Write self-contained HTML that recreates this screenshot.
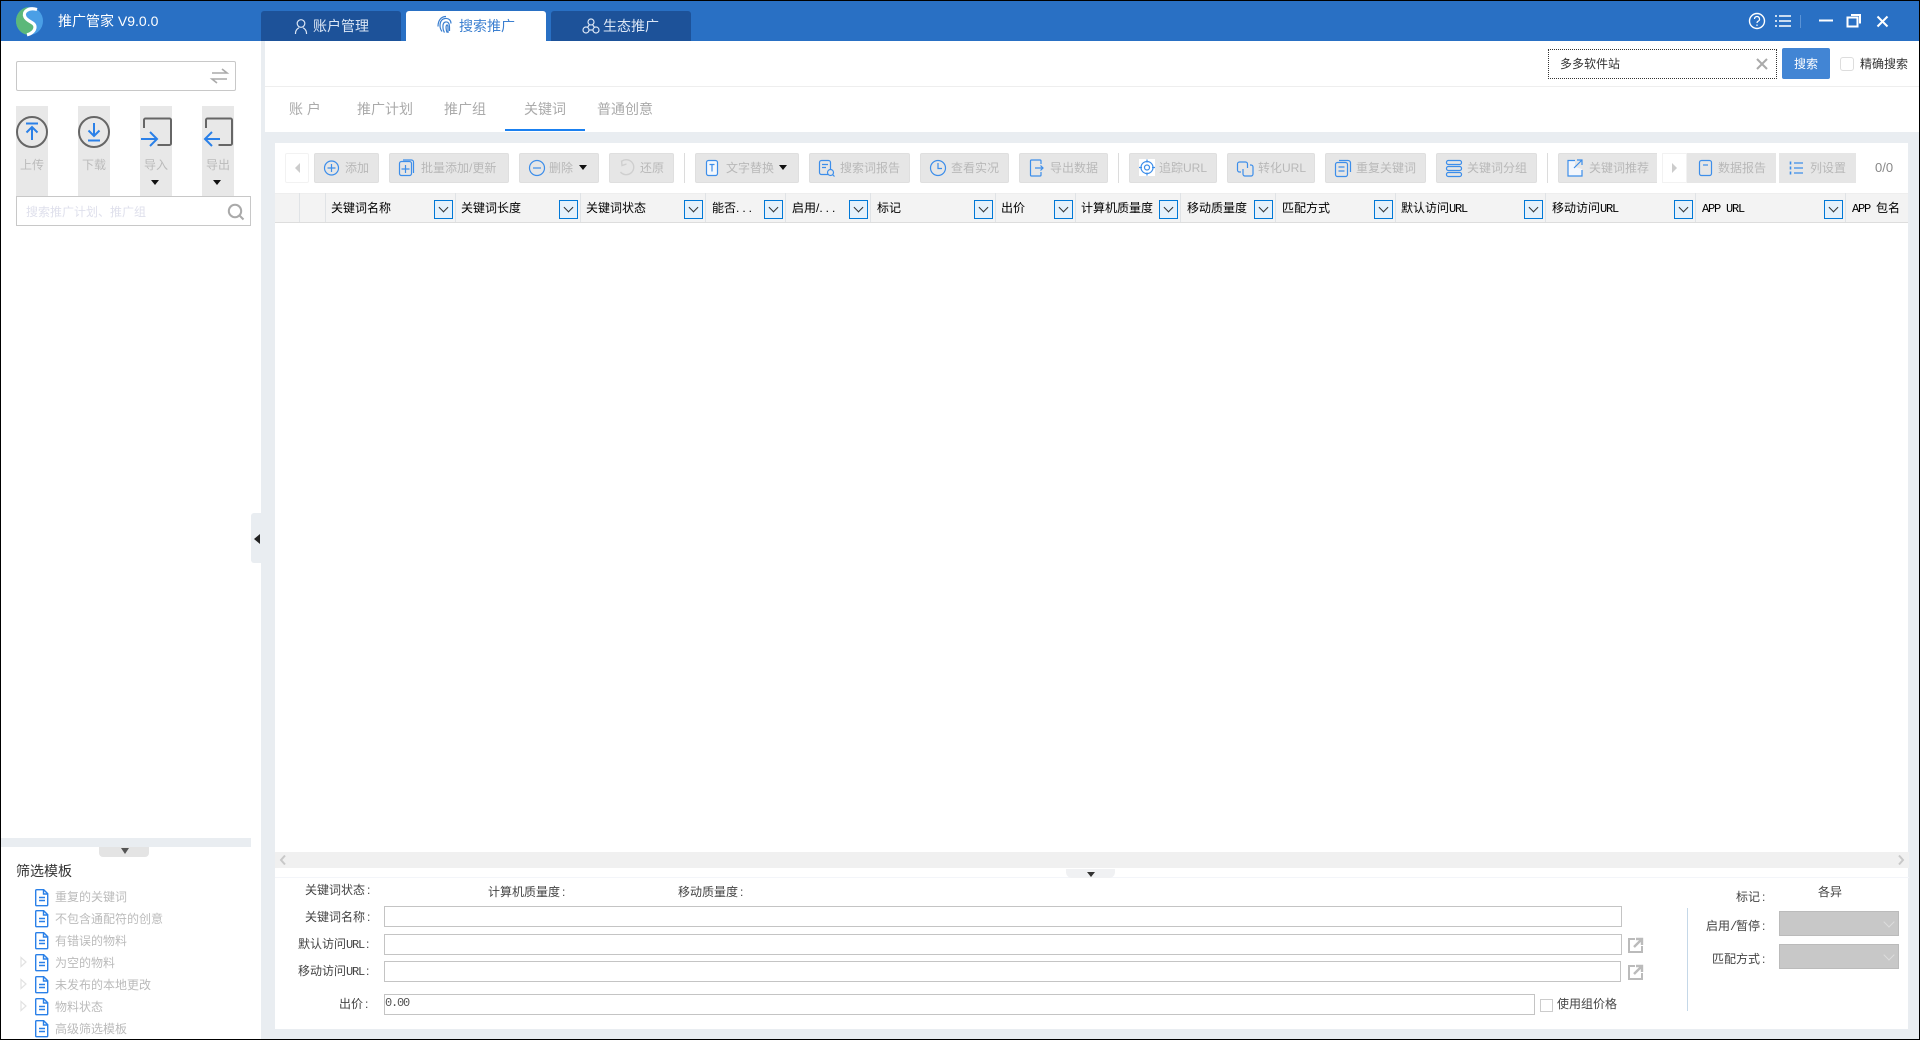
<!DOCTYPE html>
<html lang="zh-CN">
<head>
<meta charset="utf-8">
<title>推广管家 V9.0.0</title>
<style>
*{box-sizing:border-box}
html,body{margin:0;padding:0;width:1920px;height:1040px;overflow:hidden;background:#000}
body{position:relative;font-family:"Liberation Sans","Noto Sans CJK SC",sans-serif;font-size:12px}
div,span{position:absolute;white-space:nowrap}
.t{line-height:16px;height:16px}
.bg{background:#e9edf1}
.w{background:#fff}
.tab{top:11px;height:30px;width:140px;background:#1d5299;border-radius:3px 3px 0 0}
.tabt{top:17px;font-size:14px;line-height:18px;color:#dbe6f5}
.nav{top:100px;font-size:14px;line-height:18px;color:#aaa}
.lb{top:106px;width:32px;height:90px;background:#e8e8e8}
.lt{top:157px;color:#bbb;line-height:16px}
.tri{width:0;height:0;border-left:4px solid transparent;border-right:4px solid transparent;border-top:5px solid #111}
.b{top:153px;height:30px;background:#e6e6e6;border:1px solid #dfdfdf;border-radius:2px}
.bt{top:160px;color:#b8b8b8;line-height:16px}
.sep{top:153px;width:1px;height:30px;background:#dcdcdc}
.col{top:193px;width:1px;height:29px;background:#e0e3e6}
.h{top:200px;color:#000;line-height:16px}
.m{font-family:"Liberation Mono",monospace;letter-spacing:-1.2px}
.d{letter-spacing:3px}
.fb{top:200px;width:19px;height:19px;background:#e5f1fb;border:1px solid #0078d7}
.fb::after{content:"";position:absolute;left:5px;top:3px;width:6px;height:6px;border-right:1px solid #333;border-bottom:1px solid #333;transform:rotate(45deg)}
.li{left:55px;color:#bbb;line-height:16px}
.fl{color:#444;line-height:16px;font-family:"Liberation Sans","WenQuanYi Zen Hei",sans-serif}
.fm{font-family:"Liberation Mono",monospace;letter-spacing:-1.2px}
.fl i{font-style:normal;margin-left:2px}
.in{left:384px;height:21px;background:#fff;border:1px solid #c4c4c4}
.sel{left:1779px;width:120px;height:25px;background:#c8c8c8;border:1px solid #bbb}
.sel::after{content:"";position:absolute;left:105px;top:6px;width:7px;height:7px;border-right:1px solid #ddd;border-bottom:1px solid #ddd;transform:rotate(45deg)}
svg{position:absolute;left:0;top:0}
</style>
</head>
<body>
<!-- base -->
<div class="w" style="left:1px;top:1px;width:1918px;height:1038px"></div>
<div style="left:1px;top:1px;width:1918px;height:40px;background:#2970c4"></div>

<div class="tab" style="left:261px"></div>
<div class="tab" style="left:406px;background:#fff"></div>
<div class="tab" style="left:551px"></div>
<span class="t" style="left:58px;top:12px;color:#fff;font-size:14px;line-height:18px;height:18px">推广管家 V9.0.0</span>
<span class="tabt" style="left:313px">账户管理</span>
<span class="tabt" style="left:459px;color:#3b7fd0">搜索推广</span>
<span class="tabt" style="left:603px">生态推广</span>

<!-- gutters -->
<div class="bg" style="left:261px;top:41px;width:4px;height:998px"></div>
<div class="bg" style="left:265px;top:132px;width:1654px;height:11px"></div>
<div class="bg" style="left:265px;top:143px;width:10px;height:896px"></div>
<div class="bg" style="left:1908px;top:143px;width:11px;height:896px"></div>
<div class="bg" style="left:275px;top:1029px;width:1633px;height:10px"></div>
<div style="left:265px;top:86px;width:1654px;height:1px;background:#eee"></div>

<!-- left handle -->
<div class="bg" style="left:251px;top:513px;width:10px;height:50px;border-radius:3px 0 0 3px"></div>
<div style="left:254px;top:534px;width:0;height:0;border-top:5px solid transparent;border-bottom:5px solid transparent;border-right:6px solid #222"></div>

<!-- left top -->
<div class="w" style="left:16px;top:61px;width:220px;height:30px;border:1px solid #c8c8c8;border-radius:2px"></div>
<div class="lb" style="left:16px"></div>
<div class="lb" style="left:78px"></div>
<div class="lb" style="left:140px"></div>
<div class="lb" style="left:202px"></div>
<span class="lt" style="left:20px">上传</span>
<span class="lt" style="left:82px">下载</span>
<span class="lt" style="left:144px">导入</span>
<span class="lt" style="left:206px">导出</span>
<div class="tri" style="left:151px;top:180px"></div>
<div class="tri" style="left:213px;top:180px"></div>
<div class="w" style="left:16px;top:196px;width:235px;height:30px;border:1px solid #c8c8c8"></div>
<span class="t" style="left:26px;top:204px;color:#dfe0ec">搜索推广计划、推广组</span>

<!-- left bottom -->
<div class="bg" style="left:1px;top:838px;width:250px;height:9px"></div>
<div style="left:99px;top:847px;width:50px;height:10px;background:#e4e4e4;border-radius:0 0 4px 4px"></div>
<div style="left:121px;top:848px;width:0;height:0;border-left:4.5px solid transparent;border-right:4.5px solid transparent;border-top:6px solid #555"></div>
<span style="left:16px;top:862px;font-size:14px;line-height:18px;color:#333">筛选模板</span>
<span class="li" style="top:889px">重复的关键词</span>
<span class="li" style="top:911px">不包含通配符的创意</span>
<span class="li" style="top:933px">有错误的物料</span>
<span class="li" style="top:955px">为空的物料</span>
<span class="li" style="top:977px">未发布的本地更改</span>
<span class="li" style="top:999px">物料状态</span>
<span class="li" style="top:1021px">高级筛选模板</span>

<!-- top right search -->
<div class="w" style="left:1548px;top:49px;width:229px;height:30px;border:1px dotted #333"></div>
<span class="t" style="left:1560px;top:56px;color:#333">多多软件站</span>
<div style="left:1782px;top:48px;width:48px;height:31px;background:#4285d4;border-radius:2px"></div>
<span class="t" style="left:1794px;top:56px;color:#fff">搜索</span>
<div class="w" style="left:1840px;top:57px;width:14px;height:14px;border:1px solid #ddd;border-radius:3px"></div>
<span class="t" style="left:1860px;top:56px;color:#333">精确搜索</span>

<!-- sub nav -->
<span class="nav" style="left:289px">账 户</span>
<span class="nav" style="left:357px">推广计划</span>
<span class="nav" style="left:444px">推广组</span>
<span class="nav" style="left:524px">关键词</span>
<span class="nav" style="left:597px">普通创意</span>
<div style="left:505px;top:129px;width:80px;height:2px;background:#1a80f0"></div>

<!-- toolbar -->
<div class="w" style="left:285px;top:153px;width:24px;height:30px;border:1px solid #f2f2f2;border-radius:2px"></div>
<div style="left:295px;top:163px;width:0;height:0;border-top:5px solid transparent;border-bottom:5px solid transparent;border-right:5px solid #ccc"></div>
<div class="b" style="left:314px;width:65px"></div>
<div class="b" style="left:389px;width:120px"></div>
<div class="b" style="left:519px;width:80px"></div>
<div class="b" style="left:609px;width:65px"></div>
<div class="sep" style="left:684px"></div>
<div class="b" style="left:695px;width:104px"></div>
<div class="b" style="left:809px;width:101px"></div>
<div class="b" style="left:920px;width:89px"></div>
<div class="b" style="left:1019px;width:89px"></div>
<div class="sep" style="left:1118px"></div>
<div class="b" style="left:1129px;width:88px"></div>
<div class="b" style="left:1227px;width:88px"></div>
<div class="b" style="left:1325px;width:101px"></div>
<div class="b" style="left:1436px;width:101px"></div>
<div class="sep" style="left:1547px"></div>
<div class="b" style="left:1558px;width:99px;border-right:0;border-radius:2px 0 0 2px"></div>
<div class="w" style="left:1662px;top:153px;width:25px;height:30px;border:1px solid #f2f2f2"></div>
<div style="left:1672px;top:163px;width:0;height:0;border-top:5px solid transparent;border-bottom:5px solid transparent;border-left:5px solid #ccc"></div>
<div style="left:1687px;top:153px;width:89px;height:30px;background:#e6e6e6"></div>
<div style="left:1779px;top:153px;width:77px;height:30px;background:#e6e6e6"></div>

<span class="bt" style="left:345px">添加</span>
<span class="bt" style="left:421px">批量添加/更新</span>
<span class="bt" style="left:549px">删除</span>
<div class="tri" style="left:579px;top:165px"></div>
<span class="bt" style="left:640px">还原</span>
<span class="bt" style="left:726px">文字替换</span>
<div class="tri" style="left:779px;top:165px"></div>
<span class="bt" style="left:840px">搜索词报告</span>
<span class="bt" style="left:951px">查看实况</span>
<span class="bt" style="left:1050px">导出数据</span>
<span class="bt" style="left:1159px">追踪URL</span>
<span class="bt" style="left:1258px">转化URL</span>
<span class="bt" style="left:1356px">重复关键词</span>
<span class="bt" style="left:1467px">关键词分组</span>
<span class="bt" style="left:1589px">关键词推荐</span>
<span class="bt" style="left:1718px">数据报告</span>
<span class="bt" style="left:1810px">列设置</span>
<span style="left:1875px;top:160px;color:#888;font-size:13px;line-height:16px">0/0</span>

<!-- grid header -->
<div style="left:275px;top:193px;width:1633px;height:30px;background:#f3f3f3;border-top:1px solid #eee;border-bottom:1px solid #ddd"></div>
<div class="col" style="left:299px"></div>
<div class="col" style="left:325px"></div>
<div class="col" style="left:455px"></div>
<div class="col" style="left:580px"></div>
<div class="col" style="left:705px"></div>
<div class="col" style="left:785px"></div>
<div class="col" style="left:870px"></div>
<div class="col" style="left:995px"></div>
<div class="col" style="left:1075px"></div>
<div class="col" style="left:1180px"></div>
<div class="col" style="left:1275px"></div>
<div class="col" style="left:1395px"></div>
<div class="col" style="left:1545px"></div>
<div class="col" style="left:1695px"></div>
<div class="col" style="left:1845px"></div>

<span class="h" style="left:331px">关键词名称</span>
<span class="h" style="left:461px">关键词长度</span>
<span class="h" style="left:586px">关键词状态</span>
<span class="h" style="left:712px">能否<b class="d" style="font-weight:normal">...</b></span>
<span class="h" style="left:792px">启用/<b class="d" style="font-weight:normal">...</b></span>
<span class="h" style="left:877px">标记</span>
<span class="h" style="left:1001px">出价</span>
<span class="h" style="left:1081px">计算机质量度</span>
<span class="h" style="left:1187px">移动质量度</span>
<span class="h" style="left:1282px">匹配方式</span>
<span class="h" style="left:1401px">默认访问<span class="m" style="position:static">URL</span></span>
<span class="h" style="left:1552px">移动访问<span class="m" style="position:static">URL</span></span>
<span class="h m" style="left:1702px;top:201px">APP URL</span>
<span class="h" style="left:1852px"><span class="m" style="position:static">APP </span>包名</span>

<div class="fb" style="left:434px"></div>
<div class="fb" style="left:559px"></div>
<div class="fb" style="left:684px"></div>
<div class="fb" style="left:764px"></div>
<div class="fb" style="left:849px"></div>
<div class="fb" style="left:974px"></div>
<div class="fb" style="left:1054px"></div>
<div class="fb" style="left:1159px"></div>
<div class="fb" style="left:1254px"></div>
<div class="fb" style="left:1374px"></div>
<div class="fb" style="left:1524px"></div>
<div class="fb" style="left:1674px"></div>
<div class="fb" style="left:1824px"></div>

<!-- scrollbar -->
<div style="left:275px;top:852px;width:1634px;height:16px;background:#f0f0f0"></div>
<div style="left:275px;top:877px;width:1634px;height:1px;background:#f3f5f9"></div>
<div style="left:1066px;top:869px;width:49px;height:9px;background:#f0f1f3;border-radius:0 0 6px 6px"></div>
<div style="left:1087px;top:872px;width:0;height:0;border-left:4px solid transparent;border-right:4px solid transparent;border-top:5px solid #333"></div>

<!-- form -->
<span class="fl" style="left:305px;top:882px">关键词状态<i>:</i></span>
<span class="fl" style="left:488px;top:884px">计算机质量度<i>:</i></span>
<span class="fl" style="left:678px;top:884px">移动质量度<i>:</i></span>
<span class="fl" style="left:305px;top:909px">关键词名称<i>:</i></span>
<span class="fl" style="left:298px;top:936px">默认访问<span class="fm" style="position:static">URL</span><i>:</i></span>
<span class="fl" style="left:298px;top:963px">移动访问<span class="fm" style="position:static">URL</span><i>:</i></span>
<span class="fl" style="left:339px;top:996px">出价<i>:</i></span>
<div class="in" style="top:906px;width:1238px"></div>
<div class="in" style="top:934px;width:1238px"></div>
<div class="in" style="top:961px;width:1237px"></div>
<div class="in" style="top:994px;width:1151px"></div>
<span class="fm" style="left:385px;top:995px;color:#555;line-height:16px">0.00</span>
<div class="w" style="left:1540px;top:999px;width:13px;height:13px;border:1px solid #ccc"></div>
<span class="fl" style="left:1557px;top:996px">使用组价格</span>
<div style="left:1687px;top:908px;width:1px;height:103px;background:#c5d8e8"></div>
<span class="fl" style="left:1736px;top:889px">标记<i>:</i></span>
<span class="fl" style="left:1818px;top:884px">各异</span>
<span class="fl" style="left:1706px;top:918px">启用<span class="fm" style="position:static;letter-spacing:-1.2px">/</span>暂停<i>:</i></span>
<span class="fl" style="left:1712px;top:951px">匹配方式<i>:</i></span>
<div class="sel" style="top:911px"></div>
<div class="sel" style="top:944px"></div>

<!-- icons -->
<svg width="1920" height="1040" viewBox="0 0 1920 1040" fill="none">
<defs>
<g id="f" stroke="#2a80e8" stroke-width="1.4" fill="none"><path d="M36.700-7.300h7l4 4v11a1 1 0 0 1-1 1h-10a1 1 0 0 1-1-1v-14a1 1 0 0 1 1-1z"/><path d="M43.500-7v4h4M39 .5h6M39 3.500h6"/></g>
<g id="pop" stroke="#bbb" fill="none"><path d="M1635 939h-6v13h13v-6" stroke-width="2"/><path d="M1634 947l7-7M1636 939h6v6" stroke-width="2.400"/></g>
</defs>

<!-- logo -->
<ellipse cx="29.500" cy="21" rx="13.500" ry="14" fill="#4a9fe6"/>
<path d="M36 9.500C28 7 22.500 12 25 17c2.500 5 10 5 10 10 0 4-4 7-8 7.800A13.500 14 0 0 1 16 21 13.500 14 0 0 1 27 7.200z" fill="#5cb87a"/>
<path d="M37 9.500C28 7 22.500 12 25 17c2.500 5 10 5 10 10 0 4-4 7-8 7.800" stroke="#fff" stroke-width="3.200"/>

<!-- tab icons -->
<g stroke="#dbe6f5" stroke-width="1.200">
<circle cx="301" cy="23.500" r="3.800"/><path d="M295.500 34v-1c0-2.500 1.800-4.500 3.500-5.200M306.500 34v-1c0-2.500-1.800-4.500-3.500-5.200"/>
<circle cx="591" cy="22" r="3"/><circle cx="586" cy="30" r="3"/><circle cx="596" cy="30" r="3"/><path d="M589.500 24.500l-2 3M592.500 24.500l2 3M589 30h4"/>
</g>
<g stroke="#3b7fd0" stroke-width="1.200" transform="translate(-1 -1.500)">
<path d="M443 33c-3-4-3-12 3-13 4-.5 6 2 6 5"/><path d="M445.500 34c-2-3-2.500-10 1-10.500 3-.5 4 2 4 5v4"/><path d="M448 34c-1-3-1.500-7 0-7.500 1-.3 1 2 1 4v4"/><path d="M439 28c0-6 3-10 8-10"/>
</g>

<!-- window controls -->
<g stroke="#fff" stroke-width="1.400">
<circle cx="1757" cy="21" r="7.500"/>
<path d="M1754.500 19a2.500 2.500 0 1 1 3.500 2.300c-.8.400-1 1-1 1.700" stroke-width="1.200"/>
<path d="M1757 24.500v1.500" stroke-width="1.200"/>
<path d="M1775 16h2M1779 16h12M1775 21h2M1779 21h12M1775 26h2M1779 26h12" stroke-width="1.500"/>
<path d="M1819 20.500h14" stroke-width="2"/>
<rect x="1847.500" y="17.500" width="10" height="9" stroke-width="2"/>
<path d="M1851 15h9v8.500" stroke-width="2"/>
<path d="M1877.500 16.500l10 10M1887.500 16.500l-10 10" stroke-width="2"/>
</g>
<path d="M1800.500 15v13" stroke="#5b93d6"/>

<!-- search clear -->
<path d="M1757 59l10 10M1767 59l-10 10" stroke="#aaa" stroke-width="2"/>

<!-- left top icons -->
<path d="M212 73h15l-5-4M227 79h-15l5 4" stroke="#aaa" stroke-width="1.600"/>
<g stroke="#666" stroke-width="2">
<circle cx="32" cy="132" r="15"/>
<circle cx="94" cy="132" r="15"/>
<path d="M144 128v-8a1.500 1.500 0 0 1 1.500-1.500h24a1.500 1.500 0 0 1 1.500 1.500v23.500a1.500 1.500 0 0 1-1.500 1.500h-12"/>
<path d="M206 128v-8a1.500 1.500 0 0 1 1.500-1.500h23a1.500 1.500 0 0 1 1.500 1.500v23.500a1.500 1.500 0 0 1-1.500 1.500h-12"/>
</g>
<g stroke="#2a80e8" stroke-width="2">
<path d="M26 123.500h12M32 140v-13M26.500 132.500l5.500-5.500 5.500 5.500"/>
<path d="M94 123v13M88.500 130.500l5.500 5.500 5.500-5.500M88 140.500h12"/>
<path d="M141 139h15M150 132l7 7-7 7"/>
<path d="M220 139h-15M212 132l-7 7 7 7"/>
</g>
<circle cx="235" cy="211" r="6.200" stroke="#aaa" stroke-width="2"/><path d="M239.500 215.500l4 4" stroke="#aaa" stroke-width="2"/>

<!-- tree list -->
<use href="#f" y="897"/><use href="#f" y="918"/><use href="#f" y="940"/><use href="#f" y="962"/><use href="#f" y="984"/><use href="#f" y="1006"/><use href="#f" y="1028"/>
<g stroke="#e2e2e2" stroke-width="1.200">
<path d="M21 957.500v9l5-4.500z"/><path d="M21 979.500v9l5-4.500z"/><path d="M21 1001.500v9l5-4.500z"/>
</g>

<!-- toolbar icons -->
<g stroke="#3d8eea" stroke-width="1.200">
<circle cx="331.500" cy="168" r="7"/><path d="M331.500 164v8M327.500 168h8"/>
<rect x="399.500" y="161.500" width="12" height="14" rx="2" fill="#e6e6e6"/>
<path d="M403 160h8.500a2 2 0 0 1 2 2v11"/><path d="M405.500 165v8M401.500 169h8"/>
<circle cx="537" cy="168" r="7.500"/><path d="M533 168h8"/>
<rect x="706.500" y="160.500" width="11" height="15" rx="2" fill="#f4f8fd"/><path d="M709.500 164.500h5M712 164.500v7"/>
<rect x="819.500" y="160.500" width="11" height="14" rx="2"/><path d="M822 164.500h6M822 167.500h4"/><circle cx="830.500" cy="172.500" r="3" fill="#e6e6e6"/><path d="M832.500 174.500l2 2"/>
<circle cx="938" cy="168" r="7.500"/><path d="M938 163v5.500h4"/>
<path d="M1041 164v-3a1 1 0 0 0-1-1h-8.500a1 1 0 0 0-1 1v14a1 1 0 0 0 1 1h8.500a1 1 0 0 0 1-1v-3"/><path d="M1035 168h8M1040.500 165.500l2.500 2.500-2.500 2.500"/>
<rect x="1139" y="159" width="16" height="17" fill="#fff" stroke="none"/>
<circle cx="1147" cy="167.500" r="6"/><circle cx="1147" cy="167.500" r="2.500"/><path d="M1147 159.500v3M1147 172.500v3M1139 167.500h3M1152 167.500h3"/>
<path d="M1241 172h-1.500a2 2 0 0 1-2-2v-6a2 2 0 0 1 2-2h6a2 2 0 0 1 2 2v4"/><path d="M1250 165h1a2 2 0 0 1 2 2v7a2 2 0 0 1-2 2h-6a2 2 0 0 1-2-2v-5"/>
<rect x="1335.500" y="162.500" width="12" height="14" rx="2"/><path d="M1339 160.500h9a2.500 2.500 0 0 1 2.500 2.500v9"/><path d="M1338.500 167h6M1338.500 171h6"/>
<rect x="1446.500" y="160.500" width="15" height="4" rx="1.800"/><rect x="1446.500" y="166.500" width="15" height="4" rx="1.800"/><rect x="1446.500" y="172.500" width="15" height="4" rx="1.800"/>
<rect x="1699.500" y="160.500" width="12" height="15" rx="2"/><path d="M1703 165h5"/>
<path d="M1790.500 161.500v3M1790.500 166.500v3M1790.500 171.500v3" stroke-width="1.600"/><path d="M1794 163h9M1794 168h9M1794 173h9"/>
</g>
<path d="M1568 161h7v6l7 2v7h-14z" fill="#f3f7fd"/>
<path d="M1575 160.500h-7v15.500h14v-6M1574 168l8-8M1577 160h5v5" stroke="#3d8eea" stroke-width="1.200"/>
<path d="M622 161a7.500 7.500 0 1 1-1.500 11M621.500 160.500l.5 5 4.500-1.500" stroke="#cfcfcf" stroke-width="1.400"/>

<!-- scroll arrows -->
<path d="M285 855.500l-4 4.500 4 4.500M1899 855.500l4 4.500-4 4.500" stroke="#c8c8c8" stroke-width="2"/>

<!-- popout -->
<use href="#pop"/>
<use href="#pop" y="27"/>
</svg>
</body>
</html>
